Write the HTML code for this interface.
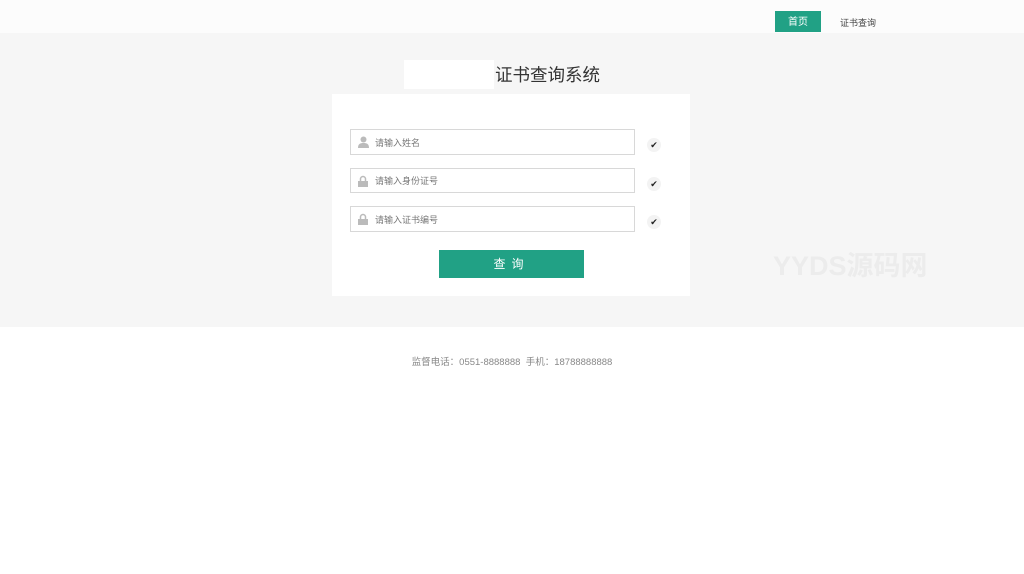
<!DOCTYPE html><html><head><meta charset="utf-8"><style>
*{margin:0;padding:0;box-sizing:border-box}
body{width:1024px;height:574px;background:#fff;font-family:"Liberation Sans","Noto Sans CJK SC",sans-serif;position:relative;overflow:hidden}
.a{position:absolute}
.inp{position:absolute;left:350px;width:285px;border:1px solid #d8d8d8;background:#fff;font-size:9px;color:#777;padding-left:24px;display:flex;align-items:center}
.chk{position:absolute;left:647px;width:14px;height:14px;border-radius:7px;background:#f3f3f3;font-size:9px;line-height:14px;text-align:center;color:#222}
.ic{position:absolute;left:7px;top:50%;transform:translateY(-50%)}
</style></head><body>
<div class="a" style="left:0;top:0;width:1024px;height:33px;background:#fcfcfc"></div>
<div class="a" style="left:775px;top:11px;width:46px;height:21px;background:#21a185;color:#fff;font-size:10px;line-height:23px;text-align:center">首页</div>
<div class="a" style="left:840px;top:16px;font-size:9px;color:#444">证书查询</div>
<div class="a" style="left:0;top:33px;width:1024px;height:294px;background:#f6f6f6"></div>
<div class="a" style="left:404px;top:60px;width:90px;height:29px;background:#fff"></div>
<div class="a" style="left:495px;top:64px;font-size:17.5px;color:#333;line-height:22px">证书查询系统</div>
<div class="a" style="left:332px;top:94px;width:358px;height:202px;background:#fff"></div>
<div class="inp" style="top:129px;height:26px"><svg class="ic" width="11" height="12" viewBox="0 0 11 12"><circle cx="5.5" cy="3.5" r="3" fill="#bbb"/><path d="M0 12C0 8 2 7 5.5 7S11 8 11 12Z" fill="#bbb"/></svg>请输入姓名</div>
<div class="inp" style="top:168px;height:25px"><svg class="ic" width="10" height="12" viewBox="0 0 10 12"><path d="M2.5 6V4a2.5 2.5 0 0 1 5 0v2" stroke="#bbb" stroke-width="1.5" fill="none"/><rect x="0" y="6" width="10" height="6" fill="#bbb"/></svg>请输入身份证号</div>
<div class="inp" style="top:206px;height:26px"><svg class="ic" width="10" height="12" viewBox="0 0 10 12"><path d="M2.5 6V4a2.5 2.5 0 0 1 5 0v2" stroke="#bbb" stroke-width="1.5" fill="none"/><rect x="0" y="6" width="10" height="6" fill="#bbb"/></svg>请输入证书编号</div>
<div class="chk" style="top:138px">✔</div>
<div class="chk" style="top:177px">✔</div>
<div class="chk" style="top:215px">✔</div>
<div class="a" style="left:439px;top:250px;width:145px;height:28px;background:#21a185;color:#fff;font-size:12px;line-height:28px;text-align:center;letter-spacing:6px">查询</div>
<div class="a" style="left:773px;top:251px;font-size:27px;font-weight:bold;color:#ececec;line-height:30px">YYDS源码网</div>
<div class="a" style="left:0;top:354px;width:1024px;text-align:center;font-size:9.5px;color:#888">监督电话：0551-8888888&nbsp; 手机：18788888888</div>
</body></html>
